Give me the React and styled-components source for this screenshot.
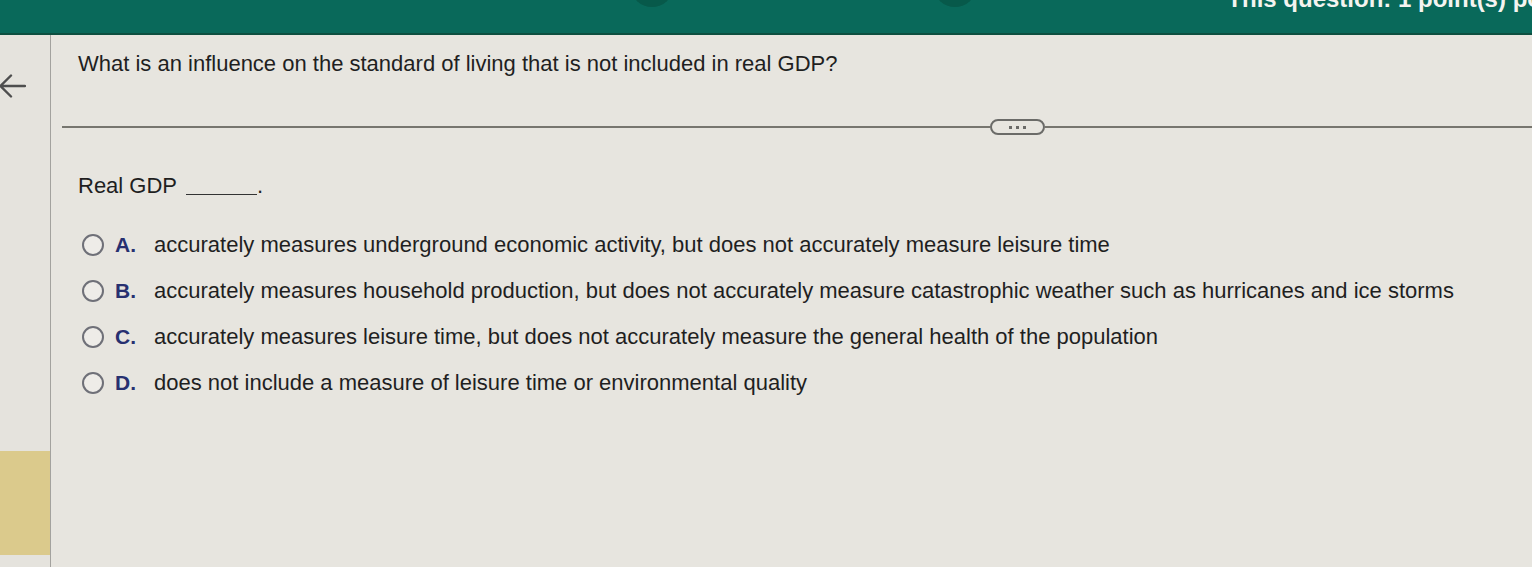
import React from 'react'
import styled, { createGlobalStyle } from 'styled-components'

const GlobalStyle = createGlobalStyle`
  html, body {
    margin: 0;
    padding: 0;
    background: #e7e5df;
    font-family: "Liberation Sans", Arial, sans-serif;
  }
`

const options = [
  { letter: 'A.', text: 'accurately measures underground economic activity, but does not accurately measure leisure time' },
  { letter: 'B.', text: 'accurately measures household production, but does not accurately measure catastrophic weather such as hurricanes and ice storms' },
  { letter: 'C.', text: 'accurately measures leisure time, but does not accurately measure the general health of the population' },
  { letter: 'D.', text: 'does not include a measure of leisure time or environmental quality' },
]

const App = () => {
  return (
    <Page>
      <GlobalStyle />
      <TopBar>
        <BarDot $left={631} />
        <BarDot $left={934} />
        <BarInfo>This question: 1 point(s) possible</BarInfo>
      </TopBar>
      <Body>
        <Sidebar>
          <BackButton>
            <svg width="28" height="26" viewBox="0 0 28 26">
              <path d="M27 13 H2.5 M13 2.5 L2.5 13 L13 23.5" stroke="#4e4e4e" strokeWidth="2.4" fill="none" strokeLinecap="round" strokeLinejoin="round" />
            </svg>
          </BackButton>
          <SideFlag />
        </Sidebar>
        <Main>
          <Question>What is an influence on the standard of living that is not included in real GDP?</Question>
          <Divider>
            <DividerLine $w={928} />
            <MoreButton>
              <Dot /><Dot /><Dot />
            </MoreButton>
            <DividerLine />
          </Divider>
          <Prompt>
            Real GDP <Blank />.
          </Prompt>
          <OptionList>
            {options.map((o) => (
              <Option key={o.letter}>
                <Radio />
                <Letter>{o.letter}</Letter>
                <OptionText>{o.text}</OptionText>
              </Option>
            ))}
          </OptionList>
        </Main>
      </Body>
    </Page>
  )
}

const Page = styled.div`
  display: flex;
  flex-direction: column;
  height: 567px;
  overflow: hidden;
`
const TopBar = styled.div`
  position: relative;
  height: 33px;
  flex-shrink: 0;
  background: #09695a;
  border-bottom: 2px solid #0d4f40;
  display: flex;
  justify-content: flex-end;
  overflow: hidden;
`
const BarDot = styled.div`
  position: absolute;
  top: -33px;
  left: ${(p) => p.$left}px;
  width: 42px;
  height: 40px;
  border-radius: 50%;
  background: #07594a;
`
const BarInfo = styled.div`
  margin-top: -15px;
  margin-right: -78px;
  color: #f4f4f0;
  font-weight: bold;
  font-size: 24px;
  white-space: nowrap;
`
const Body = styled.div`
  flex: 1;
  display: flex;
`
const Sidebar = styled.div`
  width: 50px;
  flex-shrink: 0;
  border-right: 1.5px solid #a3a29e;
  background: #e5e3dd;
  display: flex;
  flex-direction: column;
`
const BackButton = styled.div`
  margin-top: 38px;
  margin-left: -2px;
  height: 26px;
`
const SideFlag = styled.div`
  margin-top: auto;
  margin-bottom: 12px;
  height: 104px;
  background: #dbca8c;
`
const Main = styled.div`
  flex: 1;
  padding-left: 27px;
  padding-top: 17px;
  color: #1f1f1f;
`
const Question = styled.div`
  font-size: 22px;
  line-height: 24px;
`
const Divider = styled.div`
  display: flex;
  align-items: center;
  margin-left: -16px;
  margin-top: 43px;
  height: 16px;
`
const DividerLine = styled.div`
  flex: ${(p) => (p.$w ? `0 0 ${p.$w}px` : '1')};
  height: 1.5px;
  background: #77766f;
`
const MoreButton = styled.div`
  width: 51px;
  height: 12px;
  border: 2px solid #6b6b68;
  border-radius: 8px;
  display: flex;
  align-items: center;
  justify-content: center;
  gap: 4px;
`
const Dot = styled.span`
  width: 3px;
  height: 3px;
  background: #6b6b68;
`
const Prompt = styled.div`
  margin-top: 39px;
  font-size: 22px;
  line-height: 24px;
  display: flex;
  align-items: flex-end;
`
const Blank = styled.span`
  display: inline-block;
  width: 71px;
  margin-left: 9px;
  margin-bottom: 3px;
  border-bottom: 1.5px solid #333;
`
const OptionList = styled.div`
  margin-top: 35px;
  display: flex;
  flex-direction: column;
  gap: 22px;
`
const Option = styled.div`
  display: flex;
  align-items: center;
  height: 24px;
`
const Radio = styled.span`
  flex-shrink: 0;
  width: 18px;
  height: 18px;
  margin-left: 4px;
  border: 2px solid #6f7078;
  border-radius: 50%;
  background: #eeece8;
`
const Letter = styled.span`
  width: 39px;
  margin-left: 11px;
  font-weight: bold;
  font-size: 21px;
  color: #273070;
`
const OptionText = styled.span`
  font-size: 22px;
  white-space: nowrap;
`

export default App
